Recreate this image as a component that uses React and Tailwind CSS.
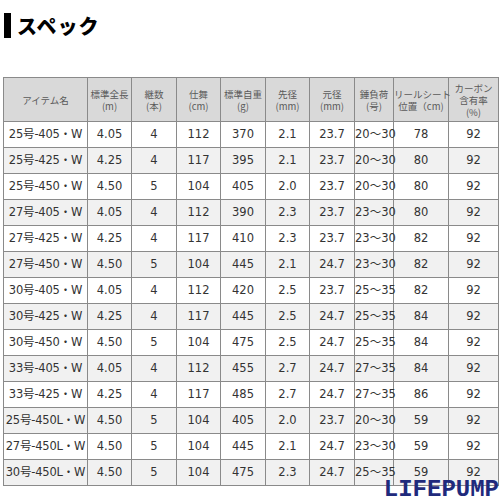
import React from "react";

const rows = [
  ["25号-405・W", "4.05", "4", "112", "370", "2.1", "23.7", "20～30", "78", "92"],
  ["25号-425・W", "4.25", "4", "117", "395", "2.1", "23.7", "20～30", "80", "92"],
  ["25号-450・W", "4.50", "5", "104", "405", "2.0", "23.7", "20～30", "80", "92"],
  ["27号-405・W", "4.05", "4", "112", "390", "2.3", "23.7", "23～30", "80", "92"],
  ["27号-425・W", "4.25", "4", "117", "410", "2.3", "23.7", "23～30", "82", "92"],
  ["27号-450・W", "4.50", "5", "104", "445", "2.1", "24.7", "23～30", "82", "92"],
  ["30号-405・W", "4.05", "4", "112", "420", "2.5", "23.7", "25～35", "82", "92"],
  ["30号-425・W", "4.25", "4", "117", "445", "2.5", "24.7", "25～35", "84", "92"],
  ["30号-450・W", "4.50", "5", "104", "475", "2.5", "24.7", "25～35", "84", "92"],
  ["33号-405・W", "4.05", "4", "112", "455", "2.7", "24.7", "27～35", "84", "92"],
  ["33号-425・W", "4.25", "4", "117", "485", "2.7", "24.7", "27～35", "86", "92"],
  ["25号-450L・W", "4.50", "5", "104", "405", "2.0", "23.7", "20～30", "59", "92"],
  ["27号-450L・W", "4.50", "5", "104", "445", "2.1", "24.7", "23～30", "59", "92"],
  ["30号-450L・W", "4.50", "5", "104", "475", "2.3", "24.7", "25～35", "59", "92"],
];

const headers = [
  ["アイテム名"],
  ["標準全長", "(m)"],
  ["継数", "(本)"],
  ["仕舞", "(cm)"],
  ["標準自重", "(g)"],
  ["先径", "(mm)"],
  ["元径", "(mm)"],
  ["錘負荷", "(号)"],
  ["リールシート", "位置（cm)"],
  ["カーボン", "含有率", "(%)"],
];

const widths = [84, 44, 45, 44, 45, 44, 45, 39, 55, 50];

export default function App() {
  return (
    <div className="relative w-[500px] h-[500px] bg-white overflow-hidden">
      <div className="flex items-center pl-[4px] pt-[13px]">
        <div className="w-[7px] h-[25px] bg-black" />
        <div
          className="ml-[6px] text-[20px] font-black leading-[25px] text-black tracking-[1px]"
          style={{ fontFamily: '"Noto Sans CJK JP", sans-serif' }}
        >
          スペック
        </div>
      </div>
      <table
        className="ml-[3px] mt-[39px] border-collapse table-fixed w-[495px]"
        style={{ fontFamily: '"DejaVu Sans", "Noto Sans CJK JP", sans-serif' }}
      >
        <colgroup>
          {widths.map((w, i) => (
            <col key={i} style={{ width: w }} />
          ))}
        </colgroup>
        <thead>
          <tr className="h-[44px] bg-[#d9d9d9]">
            {headers.map((h, i) => (
              <th
                key={i}
                className="border border-[#8a8a8a] p-0 font-normal text-[9.5px] leading-[12px] text-[#5a5a5a] text-center align-middle whitespace-nowrap"
                style={{ fontFamily: '"Noto Sans CJK JP", sans-serif' }}
              >
                {h.map((t, j) => (
                  <div key={j} className="h-[12px]">{t}</div>
                ))}
              </th>
            ))}
          </tr>
        </thead>
        <tbody>
          {rows.map((r, i) => (
            <tr key={i} className={i % 2 === 0 ? "h-[26px] bg-white" : "h-[26px] bg-[#f1f1f1]"}>
              {r.map((c, j) => (
                <td
                  key={j}
                  className={
                    j === 0
                      ? "border border-[#8a8a8a] p-0 text-[11.5px] text-[#333] text-center whitespace-nowrap tracking-[-0.2px]"
                      : "border border-[#8a8a8a] p-0 text-[11.5px] text-[#333] text-center whitespace-nowrap"
                  }
                >
                  {c}
                </td>
              ))}
            </tr>
          ))}
        </tbody>
      </table>
      <div
        className="absolute right-[1px] bottom-0 text-[24px] font-bold leading-[20px] text-[#1f2a7c]"
        style={{ fontFamily: '"Liberation Mono", monospace' }}
      >
        LIFEPUMP
      </div>
    </div>
  );
}
